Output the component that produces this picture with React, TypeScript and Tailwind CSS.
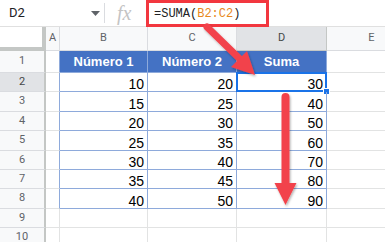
import React from 'react';

const rows = [
  [10, 20, 30],
  [15, 25, 40],
  [20, 30, 50],
  [25, 35, 60],
  [30, 40, 70],
  [35, 45, 80],
  [40, 50, 90],
];

const colWidths = ['w-[88px]', 'w-[89px]', 'w-[90px]'];

const RowHeader: React.FC<{ n: number; active?: boolean; h: string }> = ({ n, active, h }) => (
  <div
    className={`${h} w-[46px] shrink-0 flex items-center justify-center border-r-2 border-r-[#c4c7c5] border-b border-b-[#dadce0] text-[11px] ${active ? 'bg-[#e1e3e6] text-[#444746]' : 'bg-[#f8f9fa] text-[#5f6368]'}`}
  >
    {n}
  </div>
);

const App: React.FC = () => {
  return (
    <div className="relative w-[385px] h-[242px] overflow-hidden bg-white" style={{ fontFamily: 'Roboto, "Liberation Sans", sans-serif' }}>
      {/* Formula bar */}
      <div className="h-[27px] flex items-center border-b border-[#e0e0e0]">
        <div className="w-[104px] h-full flex items-center justify-between pl-[9px] pr-[4px]">
          <span className="text-[13px] text-[#202124]">D2</span>
          <svg width="9" height="5" viewBox="0 0 9 5">
            <path d="M0 0 L9 0 L4.5 5 Z" fill="#5f6368" />
          </svg>
        </div>
        <div className="w-px h-[20px] bg-[#dadce0]" />
        <div className="w-[41px] flex items-center pl-[12px]">
          <span className="italic text-[20px] leading-none text-[#c4c4c4]" style={{ fontFamily: '"Liberation Serif", serif' }}>
            fx
          </span>
        </div>
        <div className="h-[27px] w-[123px] border-[3px] border-[#f2373f] flex items-center pl-[5px] pt-[1px] text-[12px] text-[#202124]" style={{ fontFamily: '"Liberation Mono", monospace' }}>
          =SUMA(<span className="text-[#e8891d]">B2:C2</span>)
        </div>
      </div>

      {/* Column headers */}
      <div className="flex h-[24px]">
        <div className="w-[46px] shrink-0 bg-white border-r-4 border-b-4 border-[#c4c7c5]" />
        <div className="w-[14px] shrink-0 flex items-center justify-center bg-[#f8f9fa] border-r border-b border-[#dadce0] text-[11px] text-[#5f6368]">A</div>
        <div className="w-[88px] shrink-0 flex items-center justify-center bg-[#f8f9fa] border-r border-b border-[#dadce0] text-[11px] text-[#5f6368]">B</div>
        <div className="w-[89px] shrink-0 flex items-center justify-center bg-[#f8f9fa] border-r border-b border-[#dadce0] text-[11px] text-[#5f6368]">C</div>
        <div className="w-[90px] shrink-0 flex items-center justify-center bg-[#e1e3e6] border-r border-b border-[#c4c7c5] text-[11px] text-[#444746]">D</div>
        <div className="w-[90px] shrink-0 flex items-center justify-center bg-[#f8f9fa] border-r border-b border-[#dadce0] text-[11px] text-[#5f6368]">E</div>
      </div>

      {/* Row 1: table header */}
      <div className="flex">
        <RowHeader n={1} h="h-[22px]" />
        <div className="w-[14px] h-[22px] shrink-0 border-r border-b border-r-[#8eaadb] border-b-[#e2e3e3]" />
        {['Número 1', 'Número 2', 'Suma'].map((t, i) => (
          <div
            key={t}
            className={`${colWidths[i]} h-[22px] shrink-0 bg-[#4472c4] border-r border-b border-[#8eaadb] flex items-center justify-center text-white font-bold text-[13px]`}
            style={{ fontFamily: '"Liberation Sans", Arial, sans-serif' }}
          >
            {t}
          </div>
        ))}
        <div className="w-[90px] h-[22px] shrink-0 border-r border-b border-[#e2e3e3]" />
      </div>

      {/* Data rows */}
      {rows.map((r, ri) => (
        <div key={ri} className="flex">
          <RowHeader n={ri + 2} active={ri === 0} h="h-[19.4px]" />
          <div className="w-[14px] h-[19.4px] shrink-0 border-r border-b border-r-[#8eaadb] border-b-[#e2e3e3]" />
          {r.map((v, ci) => (
            <div
              key={ci}
              className={`${colWidths[ci]} h-[19.4px] shrink-0 relative border-r border-b border-[#8eaadb] flex items-end justify-end pr-[3px] text-[14px] leading-none text-black`}
              style={{ fontFamily: '"Liberation Sans", Arial, sans-serif' }}
            >
              {v}
              {ri === 0 && ci === 2 && (
                <>
                  <div className="absolute -top-px -left-px -right-px -bottom-px border-2 border-[#1a73e8]" />
                  <div className="absolute -right-[4px] -bottom-[4px] w-[7px] h-[7px] bg-[#1a73e8] border border-white" />
                </>
              )}
            </div>
          ))}
          <div className="w-[90px] h-[19.4px] shrink-0 border-r border-b border-[#e2e3e3]" />
        </div>
      ))}

      {/* Empty rows */}
      {[9, 10].map((n) => (
        <div key={n} className="flex">
          <RowHeader n={n} h="h-[19.4px]" />
          <div className="w-[14px] h-[19.4px] shrink-0 border-r border-b border-[#e2e3e3]" />
          <div className="w-[88px] h-[19.4px] shrink-0 border-r border-b border-[#e2e3e3]" />
          <div className="w-[89px] h-[19.4px] shrink-0 border-r border-b border-[#e2e3e3]" />
          <div className="w-[90px] h-[19.4px] shrink-0 border-r border-b border-[#e2e3e3]" />
          <div className="w-[90px] h-[19.4px] shrink-0 border-r border-b border-[#e2e3e3]" />
        </div>
      ))}

      {/* Annotation arrows */}
      <svg className="absolute inset-0 pointer-events-none" width="385" height="242" viewBox="0 0 385 242">
        <defs>
          <filter id="sh" x="-20%" y="-20%" width="140%" height="140%">
            <feDropShadow dx="1" dy="1.5" stdDeviation="1.2" floodColor="#000" floodOpacity="0.3" />
          </filter>
        </defs>
        <g fill="#f2434b" stroke="#f2434b" filter="url(#sh)">
          <line x1="207" y1="27" x2="243" y2="62" strokeWidth="7" strokeLinecap="round" />
          <polygon points="255,75 231,67 247,51" stroke="none" />
          <line x1="285.5" y1="97" x2="285.5" y2="186" strokeWidth="8" strokeLinecap="round" />
          <polygon points="274.5,183 296.5,183 285.5,205" stroke="none" />
        </g>
      </svg>
    </div>
  );
};

export default App;
